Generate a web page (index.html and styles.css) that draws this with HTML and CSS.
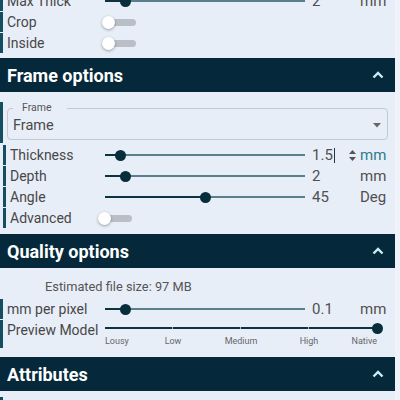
FILE: index.html
```html
<!DOCTYPE html>
<html>
<head>
<meta charset="utf-8">
<link rel="stylesheet" href="styles.css">
</head>
<body>
<div class="panel">
  <section class="sec sec-top">
    <div class="row">
      <span class="label">Max Thick</span>
      <div class="slider"><span class="fill" style="width:10%"></span><span class="thumb"></span><span class="rest"></span></div>
      <span class="value">2</span>
      <span class="unit">mm</span>
    </div>
    <div class="row">
      <span class="label">Crop</span>
      <span class="toggle"><span class="knob"></span><span class="track"></span></span>
    </div>
    <div class="row">
      <span class="label">Inside</span>
      <span class="toggle"><span class="knob"></span><span class="track"></span></span>
    </div>
  </section>

  <header class="head">
    <h2>Frame options</h2>
    <svg class="chev" width="12" height="8" viewBox="0 0 12 8"><polyline points="1.5,6.5 6,2 10.5,6.5" fill="none" stroke="#c9eef5" stroke-width="2.4"/></svg>
  </header>
  <section class="sec sec-frame">
    <div class="field-row">
      <fieldset class="select">
        <legend>Frame</legend>
        <div class="select-value">
          <span>Frame</span>
          <svg class="caret" width="8" height="5" viewBox="0 0 8 5"><polygon points="0,0 8,0 4,4.5" fill="#666"/></svg>
        </div>
      </fieldset>
    </div>
    <div class="rows">
      <div class="row indent">
        <span class="label">Thickness</span>
        <div class="slider"><span class="fill" style="width:7.5%"></span><span class="thumb"></span><span class="rest"></span></div>
        <span class="value edit"><span class="caretline">1.5</span><svg class="spin" width="7" height="13" viewBox="0 0 7 13"><polygon points="0,5 3.5,1 7,5" fill="#555"/><polygon points="0,8 3.5,12 7,8" fill="#555"/></svg></span>
        <span class="unit focus">mm</span>
      </div>
      <div class="row indent">
        <span class="label">Depth</span>
        <div class="slider"><span class="fill" style="width:10%"></span><span class="thumb"></span><span class="rest"></span></div>
        <span class="value">2</span>
        <span class="unit">mm</span>
      </div>
      <div class="row indent">
        <span class="label">Angle</span>
        <div class="slider"><span class="fill" style="width:50%"></span><span class="thumb"></span><span class="rest"></span></div>
        <span class="value">45</span>
        <span class="unit">Deg</span>
      </div>
      <div class="row indent">
        <span class="label">Advanced</span>
        <span class="toggle tight"><span class="knob"></span><span class="track"></span></span>
      </div>
    </div>
  </section>

  <header class="head">
    <h2>Quality options</h2>
    <svg class="chev" width="12" height="8" viewBox="0 0 12 8"><polyline points="1.5,6.5 6,2 10.5,6.5" fill="none" stroke="#c9eef5" stroke-width="2.4"/></svg>
  </header>
  <section class="sec sec-quality">
    <p class="estimate">Estimated file size: 97 MB</p>
    <div class="row">
      <span class="label">mm per pixel</span>
      <div class="slider"><span class="fill" style="width:10%"></span><span class="thumb"></span><span class="rest"></span></div>
      <span class="value">0.1</span>
      <span class="unit">mm</span>
    </div>
    <div class="row tall">
      <span class="label">Preview Model</span>
      <div class="pm">
        <div class="slider pm-slider"><span class="fill ticks" style="width:100%"></span><span class="thumb"></span><span class="rest"></span></div>
        <div class="marks">
          <span class="m m1">Lousy</span>
          <span class="m m2">Low</span>
          <span class="m m3">Medium</span>
          <span class="m m4">High</span>
          <span class="m m5">Native</span>
        </div>
      </div>
    </div>
  </section>

  <header class="head">
    <h2>Attributes</h2>
    <svg class="chev" width="12" height="8" viewBox="0 0 12 8"><polyline points="1.5,6.5 6,2 10.5,6.5" fill="none" stroke="#c9eef5" stroke-width="2.4"/></svg>
  </header>
  <section class="sec sec-attr">
    <div class="row"><span class="label"></span></div>
  </section>
</div>
</body>
</html>
```
FILE: styles.css
```css
html, body {
  margin: 0;
  padding: 0;
}
body {
  background: #eff2f9;
  font-family: Roboto, "Liberation Sans", Arial, sans-serif;
  color: #474747;
  height: 400px;
  overflow: hidden;
}
.panel {
  width: 395px;
  background: #e8eef8;
  margin-top: -9px;
}
.sec {
  padding: 0 0 4px;
}
.sec-frame { padding-bottom: 5px; }
.sec-quality { padding-bottom: 8px; }
.sec-attr { padding-top: 6px; }

.row {
  display: grid;
  grid-template-columns: 98px 200px 55px 1fr;
  align-items: center;
  height: 20px;
  border-left: 3px solid #134f5e;
  padding-left: 4px;
  margin-bottom: 1px;
  font-size: 14px;
}
.row.indent {
  margin-left: 3px;
  grid-template-columns: 95px 200px 55px 1fr;
}
.label {
  white-space: nowrap;
  line-height: 20px;
}
.value {
  font-size: 15px;
  padding-left: 7px;
  color: #505050;
}
.value.edit {
  display: flex;
  align-items: center;
  justify-content: space-between;
  padding-right: 4px;
}
.caretline {
  padding-right: 1px;
  border-right: 1px solid #333;
  line-height: 15px;
}
.spin { display: block; }
.unit {
  font-size: 15px;
  color: #505050;
}
.unit.focus { color: #2d7c8b; }

.slider {
  display: flex;
  align-items: center;
  height: 20px;
}
.fill {
  height: 2px;
  background: #0b3440;
}
.thumb {
  flex: 0 0 auto;
  width: 11px;
  height: 11px;
  border-radius: 50%;
  background: #072e3a;
  margin: 0 -5.5px;
  position: relative;
  z-index: 1;
}
.rest {
  flex: 1;
  height: 2px;
  background: #587f8a;
}

.toggle {
  display: flex;
  align-items: center;
  margin-left: -3px;
  justify-self: start;
}
.toggle.tight { margin-left: -7px; }
.knob {
  width: 13px;
  height: 13px;
  border-radius: 50%;
  background: #fff;
  box-shadow: 0 1px 3px rgba(0,0,0,.35);
  position: relative;
  z-index: 1;
  margin-right: -11px;
}
.track {
  width: 32px;
  height: 7px;
  border-radius: 4px;
  background: #babec7;
}

.head {
  height: 34px;
  background: #05293a;
  display: flex;
  align-items: center;
  justify-content: space-between;
  padding: 0 11px 0 7px;
}
.head h2 {
  margin: 0;
  font-size: 18px;
  font-weight: 700;
  color: #fff;
}
.chev { display: block; }

.field-row {
  margin-top: 15px;
  border-left: 3px solid #134f5e;
  padding: 0 0 3px 4px;
}
.select {
  margin: -5px 7px 0 0;
  padding: 0 5px 5px;
  border: 1px solid #c3c8cf;
  border-radius: 4px;
  min-width: 0;
}
.select legend {
  font-size: 10.5px;
  line-height: 12px;
  padding: 0 15px 0 9px;
  color: #555;
}
.select-value {
  display: flex;
  align-items: center;
  justify-content: space-between;
  height: 18px;
  margin-top: 2px;
  font-size: 14.5px;
  color: #4a4a4a;
}
.caret {
  display: block;
  margin-right: 1px;
}
.rows { margin-top: 2px; }

.estimate {
  margin: 11px 0 4px;
  padding-left: 45px;
  font-size: 12.8px;
  line-height: 16px;
  color: #555;
}

.row.tall {
  height: 28px;
  align-items: start;
}
.pm {
  grid-column: 2 / -1;
  width: 272px;
}
.pm-slider { height: 16px; }
.ticks {
  background: repeating-linear-gradient(to right, #0b3440 0 67px, #a7b8be 67px 68px);
}
.marks {
  display: grid;
  grid-template-columns: repeat(8, 34px);
  font-size: 9px;
  line-height: 10px;
  color: #666;
}
.m { white-space: nowrap; }
.m1 { grid-column: 1; justify-self: start; }
.m2 { grid-column: 2 / 4; justify-self: center; }
.m3 { grid-column: 4 / 6; justify-self: center; }
.m4 { grid-column: 6 / 8; justify-self: center; }
.m5 { grid-column: 8; justify-self: end; }
```
